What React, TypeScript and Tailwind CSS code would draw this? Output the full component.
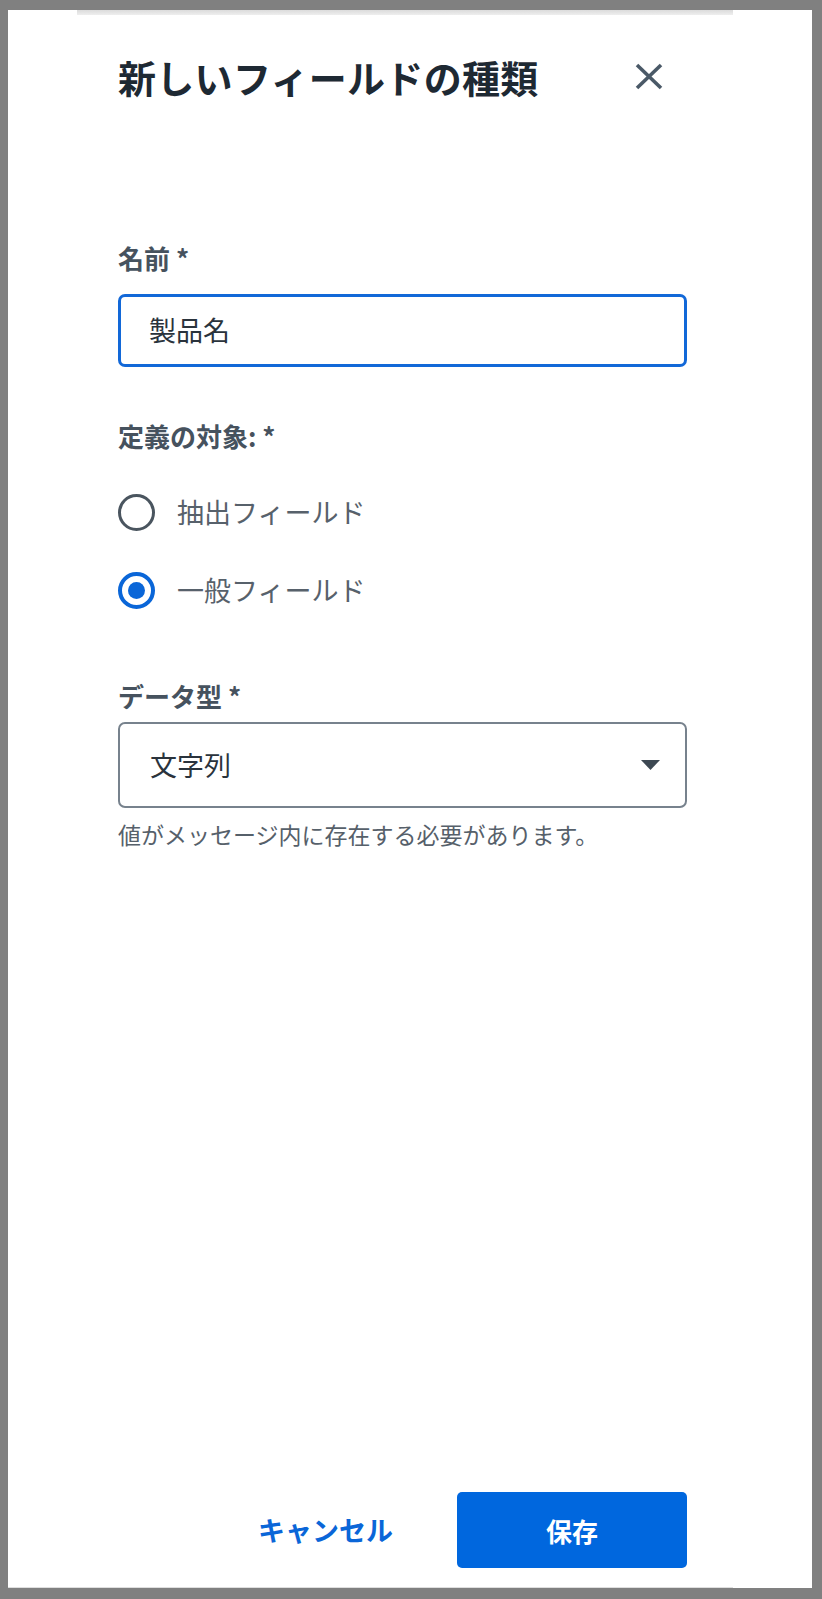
import React from "react";

const font = { fontFamily: '"Noto Sans CJK JP", "Noto Sans", sans-serif' };

function Radio({ checked, label }: { checked: boolean; label: string }) {
  return (
    <div className="flex items-center h-[40px]">
      <div
        className={
          checked
            ? "w-[37px] h-[37px] rounded-full border-[4px] border-[#0a66d8] flex items-center justify-center"
            : "w-[37px] h-[37px] rounded-full border-[3.5px] border-[#4a555f]"
        }
      >
        {checked && <div className="w-[17px] h-[17px] rounded-full bg-[#0a66d8]" />}
      </div>
      <span className="ml-[22px] text-[27px] leading-[40px] text-[#57616b]">{label}</span>
    </div>
  );
}

export default function App() {
  return (
    <div className="w-[822px] h-[1599px] bg-[#808080] pt-[10px] pl-[8px] pr-[10px] pb-[11px]" style={font}>
      <div className="relative w-full h-full bg-white flex flex-col">
        <div className="ml-[69px] w-[656px] h-[5px] bg-gradient-to-b from-[#dcdcdc] to-[#eeeeee]" />
        <div className="ml-[110px] w-[569px] flex flex-col flex-1">
          <div className="mt-[38px] h-[48px] flex items-center justify-between pr-[24px]">
            <span className="text-[38px] leading-[48px] font-bold text-[#1e2933] tracking-[0.3px]">
              新しいフィールドの種類
            </span>
            <svg width="28" height="27" viewBox="0 0 28 27" className="mt-[-2px]">
              <line x1="2" y1="2" x2="26" y2="25" stroke="#4a5967" strokeWidth="3.6" />
              <line x1="26" y1="2" x2="2" y2="25" stroke="#4a5967" strokeWidth="3.6" />
            </svg>
          </div>

          <div className="mt-[140px] text-[26px] leading-[34px] font-bold text-[#46525e]">名前 *</div>
          <div className="mt-[19px] h-[73px] rounded-[7px] border-[3px] border-[#1268d8] flex items-center pl-[28px]">
            <span className="text-[27px] text-[#2a333c]">製品名</span>
          </div>

          <div className="mt-[52px] text-[26px] leading-[34px] font-bold text-[#46525e]">定義の対象: *</div>
          <div className="mt-[39px]">
            <Radio checked={false} label="抽出フィールド" />
          </div>
          <div className="mt-[38px]">
            <Radio checked={true} label="一般フィールド" />
          </div>

          <div className="mt-[69px] text-[26px] leading-[34px] font-bold text-[#46525e]">データ型 *</div>
          <div className="mt-[9px] h-[86px] rounded-[7px] border-[2px] border-[#77828d] flex items-center justify-between pl-[30px] pr-[25px]">
            <span className="text-[27px] text-[#2a333c]">文字列</span>
            <svg width="19" height="10" viewBox="0 0 19 10">
              <polygon points="0,0 19,0 9.5,10" fill="#3d4852" />
            </svg>
          </div>
          <div className="mt-[11px] text-[23px] leading-[30px] text-[#56606a]">
            値がメッセージ内に存在する必要があります。
          </div>

          <div className="flex-1" />
          <div className="flex items-center justify-end gap-[64px] pb-[19px]">
            <span className="text-[27px] font-bold text-[#0a66d8]">キャンセル</span>
            <div className="w-[230px] h-[76px] rounded-[5px] bg-[#0067de] flex items-center justify-center">
              <span className="text-[26px] font-bold text-white">保存</span>
            </div>
          </div>
        </div>
        <div className="h-[1px] w-[725px] bg-[#dedede]" />
      </div>
    </div>
  );
}
